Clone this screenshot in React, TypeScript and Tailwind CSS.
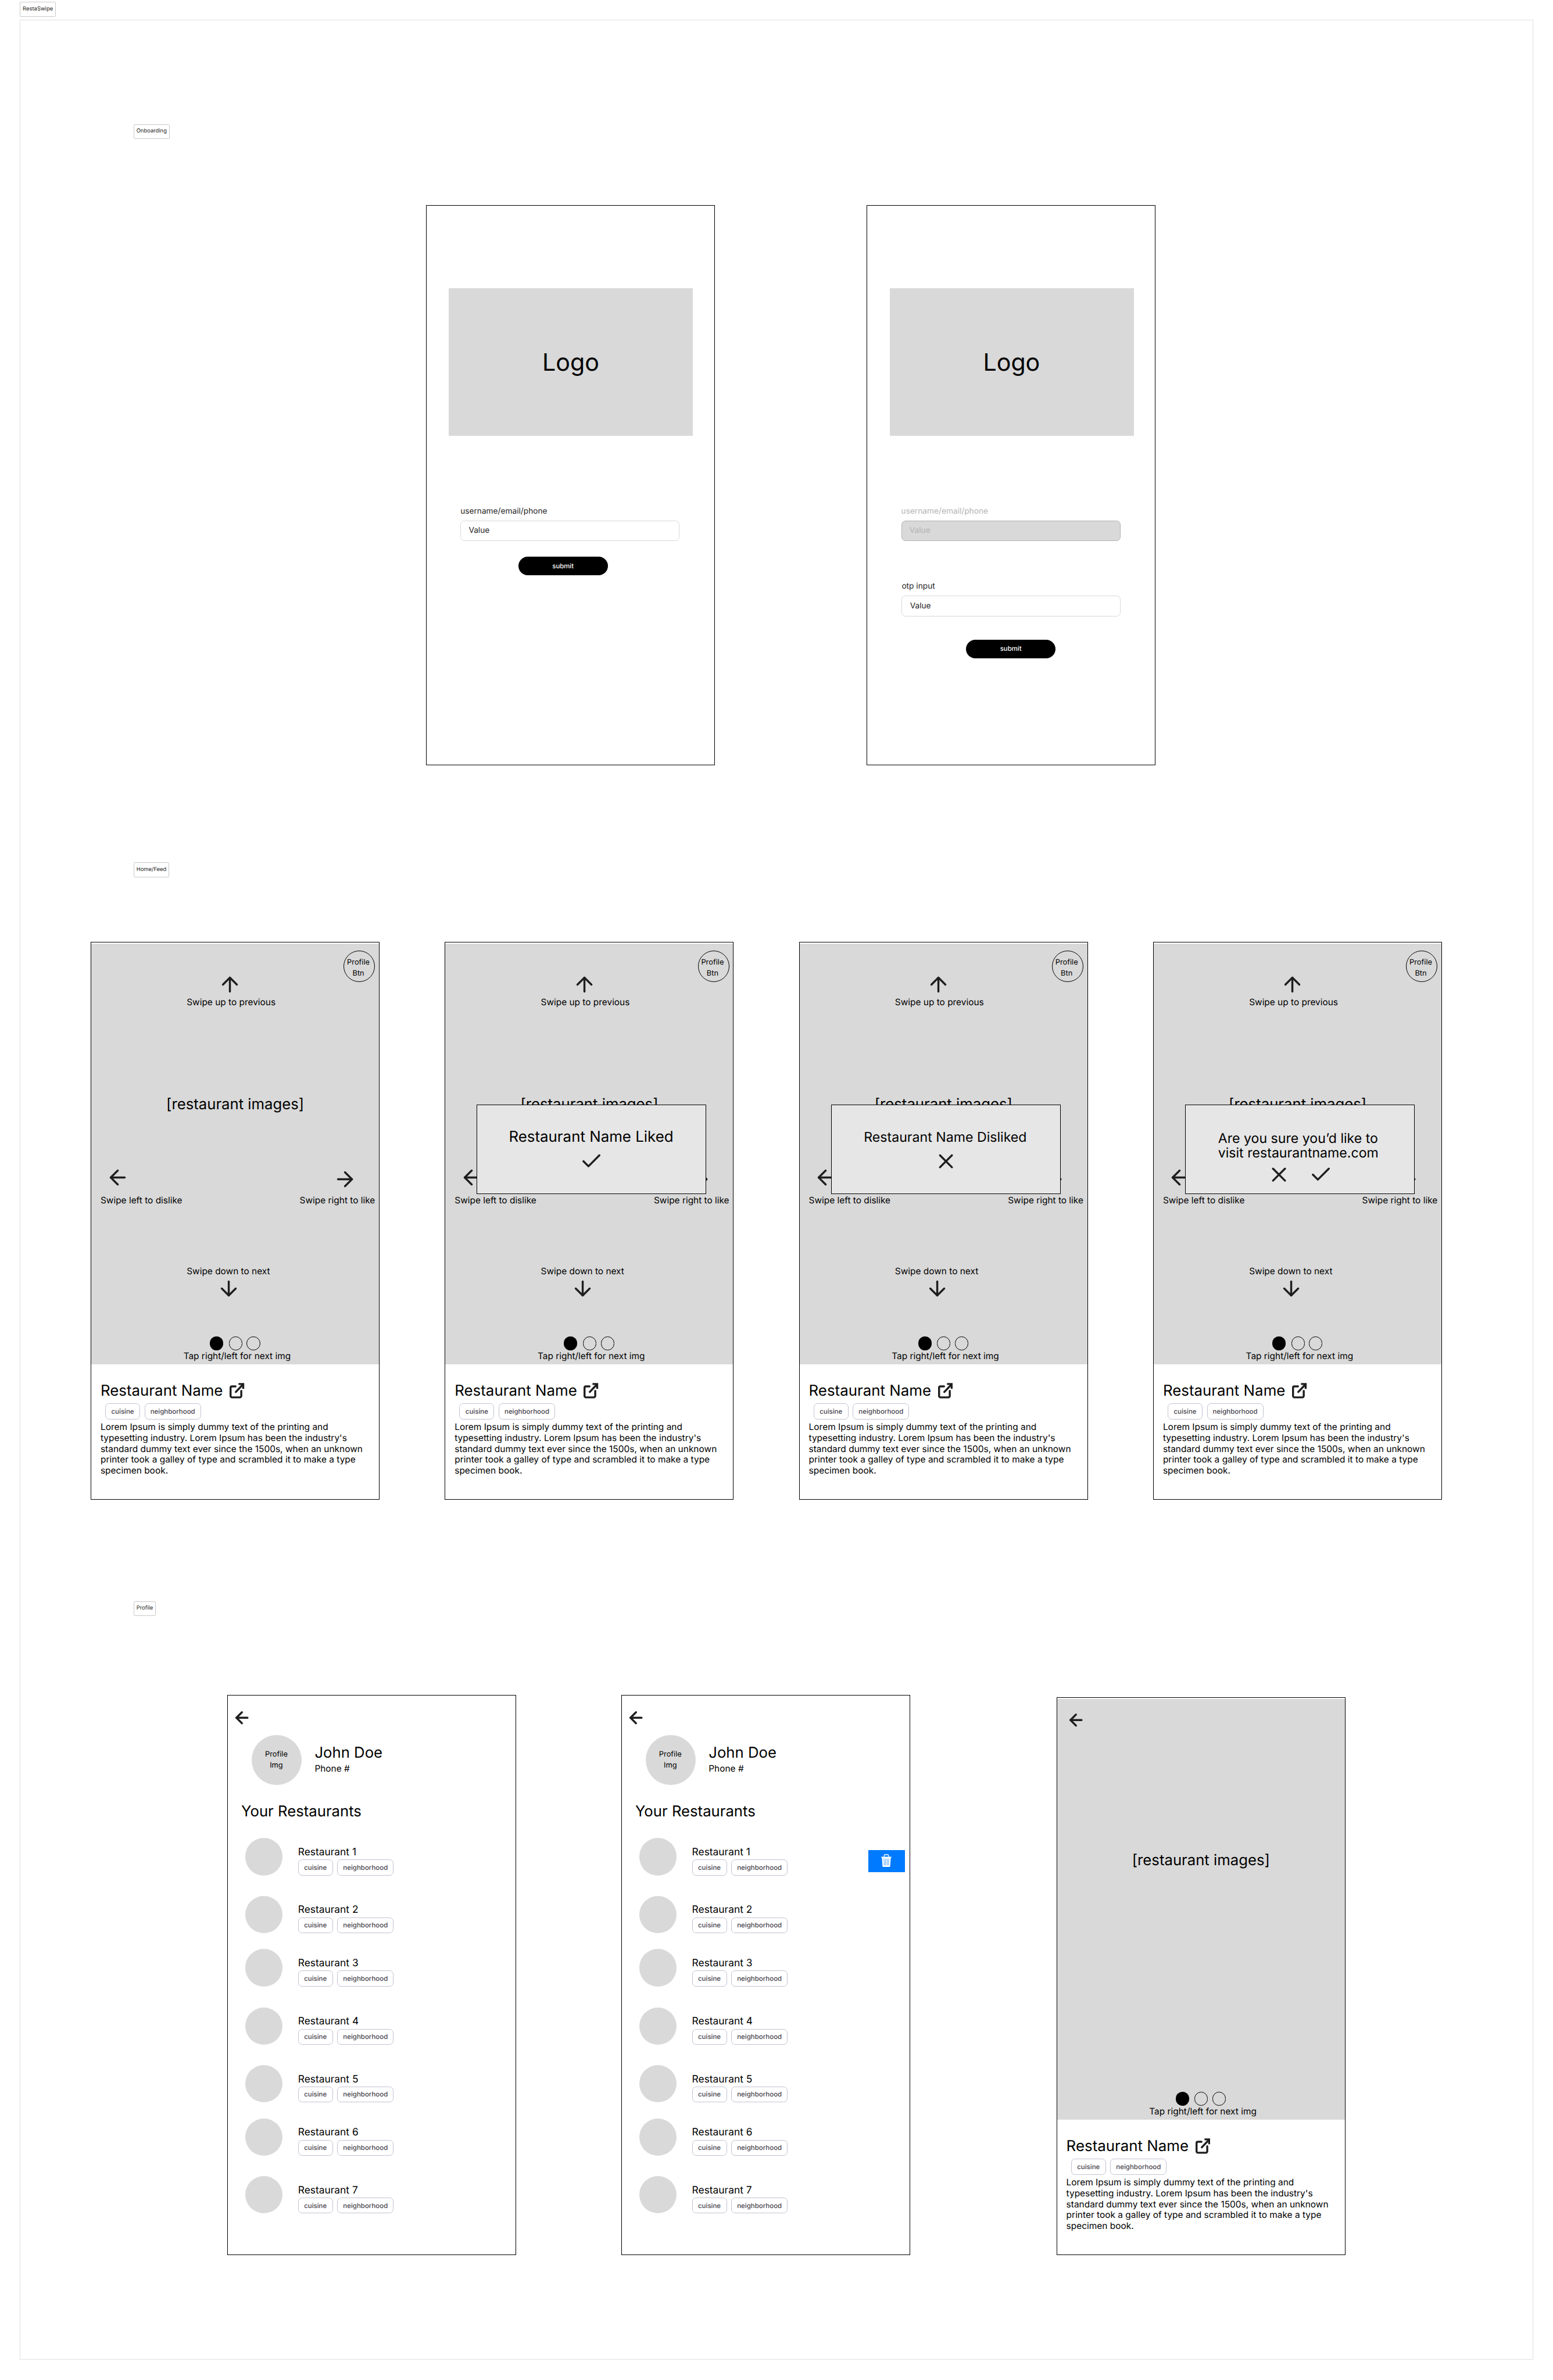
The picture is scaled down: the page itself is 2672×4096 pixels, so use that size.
import type { ReactNode } from "react";
import { ArrowDown, ArrowLeft, ArrowRight, ArrowUp, Check, X } from "lucide-react";

const INK = "#1e1e1e";

function SectionLabel({ children, className = "" }: { children: ReactNode; className?: string }) {
  return (
    <div
      className={`flex h-[30px] w-max items-center rounded-[2px] border border-[#c8c8c8] px-[4.5px] pb-px text-[11px] leading-4 text-[#1e1e1e] ${className}`}
    >
      {children}
    </div>
  );
}

function Phone({ children, className }: { children: ReactNode; className: string }) {
  return (
    <div className={`relative flex w-[580px] shrink-0 flex-col border border-black bg-white ${className}`}>
      {children}
    </div>
  );
}

/* ---------- Onboarding ---------- */

function LogoBox() {
  return (
    <div className="mt-[166px] ml-[45px] flex h-[296px] w-[490px] shrink-0 items-center justify-center bg-[#d9d9d9] pr-px text-5xl text-black">
      Logo
    </div>
  );
}

function Field({ label, disabled = false, className }: { label: string; disabled?: boolean; className: string }) {
  const text = disabled ? "text-[#b3b3b3]" : "text-[#1e1e1e]";
  const box = disabled ? "border-[#b3b3b3] bg-[#d9d9d9]" : "border-[#d9d9d9] bg-white";
  return (
    <div className={`flex w-[440px] flex-col gap-[7px] text-base leading-[22.4px] ${text} ${className}`}>
      <div>{label}</div>
      <div className={`flex h-[41px] items-center rounded-lg border px-[15.5px] pt-px ${box}`}>Value</div>
    </div>
  );
}

function SubmitButton({ className }: { className: string }) {
  return (
    <div
      className={`flex h-[37px] w-[180px] items-center justify-center rounded-full bg-black text-[13.3px] font-medium text-white ${className}`}
    >
      submit
    </div>
  );
}

/* ---------- Restaurant feed ---------- */

function Tags({ className = "" }: { className?: string }) {
  return (
    <div className={`flex gap-[9px] text-[13.4px] leading-5 font-medium text-[#49454f] ${className}`}>
      <div className="flex h-8 w-[70px] items-center justify-center rounded-lg border border-[#c3c2d2] pt-px">
        cuisine
      </div>
      <div className="flex h-8 w-[113px] items-center justify-center rounded-lg border border-[#c3c2d2] pt-px">
        neighborhood
      </div>
    </div>
  );
}

function ExternalLinkIcon({ className }: { className: string }) {
  return (
    <svg className={className} width="30" height="31" viewBox="0 0 30 31" fill="none" stroke={INK} strokeWidth="4">
      <path
        d="M12 7H4.8A2.8 2.8 0 0 0 2 9.8V26.2A2.8 2.8 0 0 0 4.8 29H20.7A2.8 2.8 0 0 0 23.5 26.2V16"
        strokeLinecap="round"
      />
      <path d="M12.5 18.2 26.5 3.5" strokeLinecap="round" />
      <path d="M18 2.2H27.4V12" />
    </svg>
  );
}

function ImageArea({ swipe }: { swipe: boolean }) {
  return (
    <div className="relative mt-[3px] flex h-[845px] shrink-0 flex-col bg-[#d9d9d9] text-lg leading-[22px] whitespace-nowrap text-black">
      {swipe ? (
        <>
          <div className="absolute top-[14px] right-2 flex size-[63px] flex-col items-center justify-center rounded-full border border-black pt-[7px] pr-1 text-[15px] leading-[22.4px]">
            <span>Profile</span>
            <span>Btn</span>
          </div>
          <ArrowUp className="mt-[58px] ml-[254.5px]" size={48} color={INK} />
          <div className="mt-[1.5px] ml-[191.5px]">Swipe up to previous</div>
        </>
      ) : (
        <ArrowLeft className="absolute top-[23px] left-[19px]" size={38} strokeWidth={2.5} color={INK} />
      )}
      <div className={`ml-[150.5px] text-3xl leading-9 ${swipe ? "mt-[176.5px]" : "mt-[306px]"}`}>
        [restaurant images]
      </div>
      {swipe && (
        <>
          <div className="mt-[103px] flex justify-between pr-11 pl-[28.5px]">
            <ArrowLeft size={48} color={INK} />
            <ArrowRight className="mt-1" size={48} color={INK} />
          </div>
          <div className="mt-2 flex justify-between pr-2 pl-[18.5px]">
            <span>Swipe left to dislike</span>
            <span>Swipe right to like</span>
          </div>
          <div className="mt-[120px] ml-[191.5px] leading-[21px]">Swipe down to next</div>
          <ArrowDown className="ml-[252px]" size={48} color={INK} />
        </>
      )}
      <div className="mt-auto ml-[238px] flex">
        <div className="size-[27px] rounded-full bg-black" />
        <div className="ml-[11px] size-[27px] rounded-full border border-black" />
        <div className="ml-[9px] size-[27px] rounded-full border border-black" />
      </div>
      <div className="mt-[2px] mb-[5px] ml-[185px]">Tap right/left for next img</div>
    </div>
  );
}

function RestaurantInfo() {
  return (
    <div className="flex flex-col pt-[35px] whitespace-nowrap text-black">
      <div className="ml-[18.5px] flex">
        <div className="w-[259px] text-[30.2px] leading-[38px]">Restaurant Name</div>
        <ExternalLinkIcon className="mt-[2px]" />
      </div>
      <Tags className="mt-[5px] ml-7" />
      <p className="mt-[5.5px] ml-[18.5px] text-[18.05px] leading-[21.8px]">
        Lorem Ipsum is simply dummy text of the printing and
        <br />
        typesetting industry. Lorem Ipsum has been the industry's
        <br />
        standard dummy text ever since the 1500s, when an unknown
        <br />
        printer took a galley of type and scrambled it to make a type
        <br />
        specimen book.
      </p>
    </div>
  );
}

function Modal({ children }: { children: ReactNode }) {
  return (
    <div className="absolute top-[326px] left-[63px] flex h-[180px] w-[461px] flex-col border border-black bg-[#e6e6e6] whitespace-nowrap text-black">
      {children}
    </div>
  );
}

function FeedScreen({ modal }: { modal?: ReactNode }) {
  return (
    <Phone className="h-[1121px]">
      <ImageArea swipe />
      <RestaurantInfo />
      {modal && <Modal>{modal}</Modal>}
    </Phone>
  );
}

const likedModal = (
  <div className="flex flex-col items-center pt-[46px]">
    <div className="pr-[2px] text-[30.2px] leading-[38px]">Restaurant Name Liked</div>
    <Check className="mt-[5px]" size={48} color={INK} />
  </div>
);

const dislikedModal = (
  <div className="flex flex-col items-center pt-[46px]">
    <div className="pr-[2px] text-[27px] leading-[38px]">Restaurant Name Disliked</div>
    <X className="mt-[5px]" size={48} color={INK} />
  </div>
);

const visitModal = (
  <div className="flex flex-col pt-[53px]">
    <div className="ml-[65px] text-[27px] leading-[28.3px]">
      Are you sure you’d like to
      <br />
      visit restaurantname.com
    </div>
    <div className="mt-[5.5px] ml-[163.5px] flex gap-9">
      <X size={48} color={INK} />
      <Check size={48} color={INK} />
    </div>
  </div>
);

/* ---------- Profile ---------- */

function TrashIcon() {
  return (
    <svg width="21" height="26" viewBox="0 0 62 76" fill="none">
      <path d="M18 17V7a4 4 0 0 1 4-4h18a4 4 0 0 1 4 4v10" stroke="#fff" strokeWidth="4.5" />
      <path d="M0 15h62v4.5h-4.5L54 70a6 6 0 0 1-6 6H14a6 6 0 0 1-6-6L4.5 19.5H0z" fill="#fff" />
      <path d="M17 26l1.5 40M26.5 26v40M35.5 26v40M45 26l-1.5 40" stroke="#007aff" strokeWidth="3" opacity="0.8" />
    </svg>
  );
}

const restaurants = [
  { name: "Restaurant 1", gap: "mt-[34px]" },
  { name: "Restaurant 2", gap: "mt-[41px]" },
  { name: "Restaurant 3", gap: "mt-8" },
  { name: "Restaurant 4", gap: "mt-[42px]" },
  { name: "Restaurant 5", gap: "mt-[41px]" },
  { name: "Restaurant 6", gap: "mt-8" },
  { name: "Restaurant 7", gap: "mt-[41px]" },
];

function ProfileScreen({ deleting = false }: { deleting?: boolean }) {
  return (
    <Phone className="h-[1125px] text-black">
      <ArrowLeft className="mt-[25px] ml-[10px]" size={38} strokeWidth={2.5} color={INK} />
      <div className="mt-4 ml-12 flex">
        <div className="flex size-[100px] flex-col items-center justify-center rounded-full bg-[#d9d9d9] pt-px pr-px text-[15px] leading-[22.4px]">
          <span>Profile</span>
          <span>Img</span>
        </div>
        <div className="ml-[26.5px] pt-[18.5px]">
          <div className="text-3xl leading-9">John Doe</div>
          <div className="mt-[3px] text-lg leading-[22px]">Phone #</div>
        </div>
      </div>
      <div className="mt-[37px] ml-[27px] text-3xl leading-9">Your Restaurants</div>
      <div className="flex flex-col">
        {restaurants.map((r, i) => (
          <div key={r.name} className={`ml-[35px] flex h-[75px] ${r.gap}`}>
            <div className="size-[75px] rounded-full bg-[#d9d9d9]" />
            <div className="ml-[31px] flex flex-col pt-[17px]">
              <div className="w-[116px] text-center text-[20.3px] leading-6 whitespace-nowrap">{r.name}</div>
              <Tags className="mt-[2px]" />
            </div>
            {deleting && i === 0 && (
              <div className="mt-6 mr-[9px] ml-auto flex h-[45px] w-[74px] items-center justify-center bg-[#007aff] pb-[3px]">
                <TrashIcon />
              </div>
            )}
          </div>
        ))}
      </div>
    </Phone>
  );
}

export default function App() {
  return (
    <div className="h-[4779px] w-[3118px] overflow-hidden bg-white px-10 pt-1 font-['Inter',sans-serif] [text-rendering:geometricPrecision] [zoom:0.857]">
      <SectionLabel>RestaSwipe</SectionLabel>
      <div className="mt-[6px] flex h-[4699px] w-[3038px] flex-col border border-[#e0e0e0]">
        <SectionLabel className="mt-[208px] ml-[227px]">Onboarding</SectionLabel>
        <div className="mt-[133px] ml-[814px] flex gap-[305px]">
          <Phone className="h-[1125px]">
            <LogoBox />
            <Field label="username/email/phone" className="mt-[140.5px] ml-[68px]" />
            <SubmitButton className="mt-8 ml-[184px]" />
          </Phone>
          <Phone className="h-[1125px]">
            <LogoBox />
            <Field label="username/email/phone" disabled className="mt-[140.5px] ml-[68px]" />
            <Field label="otp input" className="mt-[81px] ml-[69px]" />
            <SubmitButton className="mt-[47px] ml-[198px]" />
          </Phone>
        </div>

        <SectionLabel className="mt-[195px] ml-[227px]">Home/Feed</SectionLabel>
        <div className="mt-[129px] ml-[141px] flex gap-[131px]">
          <FeedScreen />
          <FeedScreen modal={likedModal} />
          <FeedScreen modal={dislikedModal} />
          <FeedScreen modal={visitModal} />
        </div>

        <SectionLabel className="mt-[203.5px] ml-[227px]">Profile</SectionLabel>
        <div className="mt-[158.5px] ml-[415px] flex items-start">
          <ProfileScreen />
          <div className="ml-[211px]">
            <ProfileScreen deleting />
          </div>
          <div className="mt-1 ml-[294px]">
            <Phone className="h-[1121px]">
              <ImageArea swipe={false} />
              <RestaurantInfo />
            </Phone>
          </div>
        </div>
      </div>
    </div>
  );
}
